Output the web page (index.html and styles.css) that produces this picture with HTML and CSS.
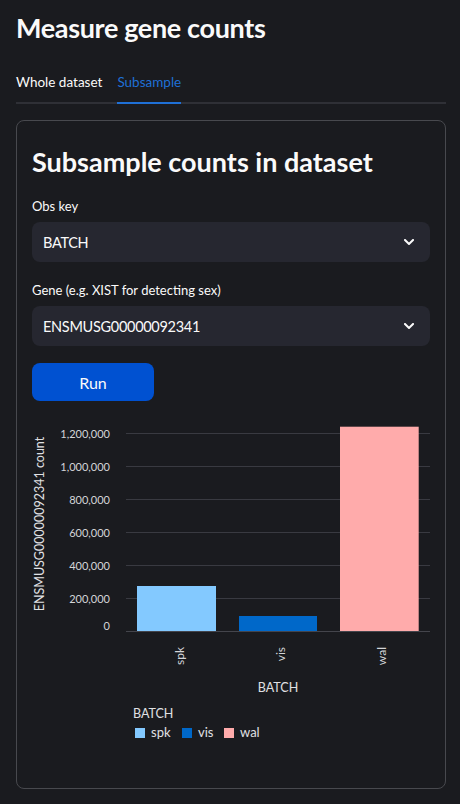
FILE: index.html
```html
<!DOCTYPE html>
<html lang="en">
<head>
<meta charset="utf-8">
<title>Measure gene counts</title>
<link rel="stylesheet" href="styles.css">
</head>
<body>
<main class="app">
  <h1 class="title">Measure gene counts</h1>
  <nav class="tabs">
    <div class="tab">Whole dataset</div>
    <div class="tab active">Subsample</div>
  </nav>
  <section class="card">
    <h2 class="card-title">Subsample counts in dataset</h2>
    <div class="field first">
      <label class="field-label">Obs key</label>
      <div class="select"><span>BATCH</span><svg class="chev" width="10" height="6" viewBox="0 0 10 6"><polyline points="1,1 5,5 9,1" fill="none" stroke="#fafafa" stroke-width="2" stroke-linecap="square"/></svg></div>
    </div>
    <div class="field second">
      <label class="field-label">Gene (e.g. XIST for detecting sex)</label>
      <div class="select"><span>ENSMUSG00000092341</span><svg class="chev" width="10" height="6" viewBox="0 0 10 6"><polyline points="1,1 5,5 9,1" fill="none" stroke="#fafafa" stroke-width="2" stroke-linecap="square"/></svg></div>
    </div>
    <button class="btn">Run</button>
    <svg class="chart" width="398" height="357" viewBox="0 0 398 357">
      <g class="grid">
        <line x1="94" y1="17.5" x2="398" y2="17.5"/>
        <line x1="94" y1="50.5" x2="398" y2="50.5"/>
        <line x1="94" y1="83.5" x2="398" y2="83.5"/>
        <line x1="94" y1="116.5" x2="398" y2="116.5"/>
        <line x1="94" y1="149.5" x2="398" y2="149.5"/>
        <line x1="94" y1="182.5" x2="398" y2="182.5"/>
        <line class="domain" x1="94" y1="215.5" x2="398" y2="215.5"/>
      </g>
      <g class="ylabels">
        <text x="78" y="21.5">1,200,000</text>
        <text x="78" y="54.5">1,000,000</text>
        <text x="78" y="87.5">800,000</text>
        <text x="78" y="120.5">600,000</text>
        <text x="78" y="153.5">400,000</text>
        <text x="78" y="186.5">200,000</text>
        <text x="78" y="214">0</text>
      </g>
      <text class="axis-title" transform="translate(12,108) rotate(-90)" text-anchor="middle">ENSMUSG00000092341 count</text>
      <rect x="105" y="170" width="79" height="45" fill="#83c9ff"/>
      <rect x="207" y="200" width="78" height="15" fill="#0068c9"/>
      <rect x="308" y="10.7" width="78.7" height="204.3" fill="#ffabab"/>
      <g class="xlabels">
        <text transform="translate(149,231) rotate(-90)">spk</text>
        <text transform="translate(250,231) rotate(-90)">vis</text>
        <text transform="translate(351,231) rotate(-90)">wal</text>
      </g>
      <text class="axis-title" x="246" y="276" text-anchor="middle">BATCH</text>
      <text class="legend-title" x="101" y="302">BATCH</text>
      <rect x="103" y="312" width="10" height="10" fill="#83c9ff"/>
      <text class="legend-label" x="119" y="321">spk</text>
      <rect x="150" y="312" width="10" height="10" fill="#0068c9"/>
      <text class="legend-label" x="166" y="321">vis</text>
      <rect x="192" y="312" width="10" height="10" fill="#ffabab"/>
      <text class="legend-label" x="208" y="321">wal</text>
    </svg>
  </section>
</main>
</body>
</html>
```
FILE: styles.css
```css
body {
  margin: 0;
  background: #1a1b1f;
  color: #fafafa;
  font-family: Lato, "Noto Sans", sans-serif;
}
.app {
  padding: 0 14px 0 16px;
}
.title {
  margin: 0;
  padding-top: 10px;
  font-size: 27px;
  letter-spacing: -0.35px;
  line-height: 36px;
  font-weight: 700;
}
.tabs {
  display: flex;
  gap: 15px;
  margin-top: 16px;
  border-bottom: 2px solid #2f3036;
}
.tab {
  font-size: 13.5px;
  line-height: 40px;
  margin-bottom: -2px;
  border-bottom: 2px solid transparent;
}
.tab.active {
  color: #1f70d6;
  border-bottom-color: #1f70d6;
}
.card {
  margin-top: 16px;
  border: 1px solid #48494e;
  border-radius: 8px;
  padding: 15px;
}
.card-title {
  margin: 8px 0 0;
  font-size: 27px;
  line-height: 36px;
  font-weight: 700;
}
.field.first { margin-top: 16px; }
.field.second { margin-top: 18px; }
.field-label {
  display: block;
  font-size: 13px;
  line-height: 20px;
  margin-bottom: 6px;
}
.select {
  height: 40px;
  box-sizing: border-box;
  background: #262730;
  border-radius: 8px;
  display: flex;
  align-items: center;
  justify-content: space-between;
  padding: 0 16px 0 11px;
  font-size: 14.5px;
  letter-spacing: -0.3px;
}
.chev { display: block; }
.btn {
  display: block;
  margin-top: 17px;
  width: 122px;
  height: 38px;
  background: #0051d1;
  border: none;
  border-radius: 8px;
  color: #fafafa;
  font-family: inherit;
  font-size: 16px;
}
.chart {
  display: block;
  margin-top: 15px;
}
.grid line {
  stroke: #393a41;
  stroke-width: 1;
}
.grid line.domain {
  stroke: #44454c;
}
.ylabels text {
  font-size: 11px;
  fill: #d4d5d8;
  text-anchor: end;
}
.xlabels text {
  font-size: 12px;
  fill: #d4d5d8;
  text-anchor: end;
  dominant-baseline: middle;
}
.axis-title {
  font-size: 12.5px;
  fill: #e0e1e4;
}
.legend-title {
  font-size: 12.5px;
  fill: #e0e1e4;
}
.legend-label {
  font-size: 13px;
  fill: #e0e1e4;
}
```
